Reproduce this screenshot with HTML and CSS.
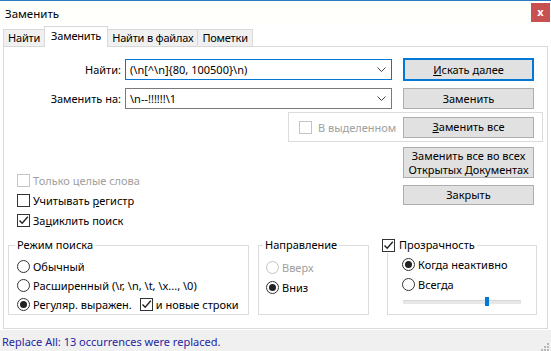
FILE: index.html
```html
<!DOCTYPE html>
<html lang="ru">
<head>
    <meta charset="UTF-8">
    <title>Заменить</title>
    <link rel="stylesheet" href="styles.css">
</head>
<body>
    <div class="titlebar">
        <span class="title">Заменить</span>
        <span class="close">x</span>
    </div>

    <div class="tabs">
        <div class="tab">Найти</div>
        <div class="tab active">Заменить</div>
        <div class="tab">Найти в файлах</div>
        <div class="tab">Пометки</div>
    </div>

    <div class="panel">
        <div class="row row-find">
            <span class="field-label">Найти:</span>
            <div class="combo focus">
                <span class="combo-text">(\n[^\n]{80, 100500}\n)</span>
                <svg class="chevron" width="9" height="6" viewBox="0 0 9 6"><polyline points="0.5,0.5 4.5,4.5 8.5,0.5" fill="none" stroke="#444" stroke-width="1"/></svg>
            </div>
            <button class="btn default"><u>И</u>скать далее</button>
        </div>

        <div class="row row-replace">
            <span class="field-label">Заменить на:</span>
            <div class="combo">
                <span class="combo-text">\n--!!!!!!\1</span>
                <svg class="chevron" width="9" height="6" viewBox="0 0 9 6"><polyline points="0.5,0.5 4.5,4.5 8.5,0.5" fill="none" stroke="#444" stroke-width="1"/></svg>
            </div>
            <button class="btn">Заменить</button>
        </div>

        <div class="frame">
            <label class="check disabled"><span class="box"></span><span>В выделенном</span></label>
            <button class="btn"><u>З</u>аменить все</button>
        </div>

        <div class="middle">
            <div class="options">
                <label class="check disabled"><span class="box"></span><span>Только целые слова</span></label>
                <label class="check"><span class="box"></span><span>Учитывать <u>р</u>егистр</span></label>
                <label class="check"><span class="box checked"><svg width="11" height="11" viewBox="0 0 11 11"><polyline points="1.5,5.5 4.2,8.3 9.8,1.8" fill="none" stroke="#222" stroke-width="1.4"/></svg></span><span>За<u>ц</u>иклить поиск</span></label>
            </div>
            <div class="actions">
                <button class="btn tall">Заменить все во всех<br>Открытых <u>Д</u>окументах</button>
                <button class="btn close-btn">Закрыть</button>
            </div>
        </div>

        <div class="groups">
            <fieldset class="group mode">
                <legend>Режим поиска</legend>
                <label class="radio"><span class="dot"></span><span>Обычный</span></label>
                <label class="radio"><span class="dot"></span><span>Расширенный (\r, \n, \t, \x..., \0)</span></label>
                <div class="radio-line">
                    <label class="radio"><span class="dot on"></span><span>Регуляр. выражен.</span></label>
                    <label class="check newlines"><span class="box checked"><svg width="11" height="11" viewBox="0 0 11 11"><polyline points="1.5,5.5 4.2,8.3 9.8,1.8" fill="none" stroke="#222" stroke-width="1.4"/></svg></span><span>и новые строки</span></label>
                </div>
            </fieldset>

            <fieldset class="group direction">
                <legend>Направление</legend>
                <label class="radio disabled"><span class="dot"></span><span>Вверх</span></label>
                <label class="radio"><span class="dot on"></span><span>Вниз</span></label>
            </fieldset>

            <fieldset class="group transparency">
                <legend><label class="check"><span class="box checked"><svg width="11" height="11" viewBox="0 0 11 11"><polyline points="1.5,5.5 4.2,8.3 9.8,1.8" fill="none" stroke="#222" stroke-width="1.4"/></svg></span><span>Прозрачность</span></label></legend>
                <label class="radio"><span class="dot on"></span><span>Когда неактивно</span></label>
                <label class="radio"><span class="dot"></span><span>Всегда</span></label>
                <div class="slider">
                    <div class="track"></div>
                    <div class="thumb"></div>
                </div>
            </fieldset>
        </div>
    </div>

    <div class="status">
        <span class="status-text">Replace All: 13 occurrences were replaced.</span>
        <svg class="grip" width="10" height="10" viewBox="0 0 10 10">
            <rect x="8" y="2" width="2" height="2" fill="#b8b8b8"/>
            <rect x="5" y="5" width="2" height="2" fill="#b8b8b8"/>
            <rect x="8" y="5" width="2" height="2" fill="#b8b8b8"/>
            <rect x="2" y="8" width="2" height="2" fill="#b8b8b8"/>
            <rect x="5" y="8" width="2" height="2" fill="#b8b8b8"/>
            <rect x="8" y="8" width="2" height="2" fill="#b8b8b8"/>
        </svg>
    </div>
</body>
</html>
```

FILE: styles.css
```css
body {
    margin: 0;
    width: 551px;
    height: 351px;
    overflow: hidden;
    background-color: #ffffff;
    font-family: "Noto Sans", "Open Sans", sans-serif;
    font-size: 11px;
    color: #000;
}
.titlebar {
    height: 25px;
    border-top: 1px solid #2b7bbf;
    box-sizing: border-box;
    display: flex;
    justify-content: space-between;
    background-color: #fffffb;
}
.title {
    padding-left: 5px;
    font-size: 11.5px;
    line-height: 26px;
}
.close {
    width: 19px;
    height: 19px;
    margin-top: 2px;
    margin-right: 1px;
    background-color: #c75050;
    color: #fff;
    font-weight: bold;
    font-size: 11px;
    line-height: 17px;
    text-align: center;
}
.tabs {
    display: flex;
    align-items: flex-end;
    height: 21px;
    padding-left: 3px;
}
.tab {
    height: 16px;
    line-height: 16px;
    padding: 0 4px;
    letter-spacing: -0.2px;
    background-color: #f0f0f0;
    border: 1px solid #d9d9d9;
    border-bottom: none;
    margin-left: -1px;
}
.tab:first-child {
    margin-left: 0;
}
.tab.active {
    height: 20px;
    line-height: 18px;
    padding: 0 6px;
    background-color: #fff;
    margin-bottom: -1px;
    position: relative;
    z-index: 1;
}
.panel {
    margin: 0 3px;
    height: 283px;
    box-sizing: border-box;
    border: 1px solid #d9d9d9;
    background-color: #fff;
}
.row {
    display: flex;
    align-items: center;
    height: 21px;
}
.row-find {
    margin-top: 12px;
}
.row-replace {
    margin-top: 8px;
}
.field-label {
    width: 117px;
    text-align: right;
}
.combo {
    margin-left: 4px;
    width: 267px;
    height: 21px;
    box-sizing: border-box;
    border: 1px solid #7a7a7a;
    display: flex;
    align-items: center;
    justify-content: space-between;
    padding: 0 5px 0 4px;
}
.combo.focus {
    border-color: #0078d7;
}
.btn {
    font-family: inherit;
    font-size: 11px;
    color: #000;
    width: 131px;
    height: 21px;
    padding: 0;
    box-sizing: border-box;
    background-color: #e1e1e1;
    border: 1px solid #adadad;
    line-height: 14px;
}
.row .btn {
    margin-left: 11px;
}
.btn.default {
    height: 23px;
    border: 2px solid #0078d7;
}
.frame {
    margin: 3px 0 0 284px;
    width: 255px;
    height: 30px;
    box-sizing: border-box;
    border: 1px solid #dcdcdc;
    display: flex;
    align-items: center;
    padding-left: 10px;
}
.frame .btn {
    margin-left: auto;
    margin-right: 8px;
}
.check, .radio {
    display: flex;
    align-items: center;
    height: 20px;
}
.box {
    width: 13px;
    height: 13px;
    box-sizing: border-box;
    border: 1px solid #333;
    margin-right: 3px;
    display: flex;
    align-items: center;
    justify-content: center;
    background-color: #fff;
}
.disabled {
    color: #a0a0a0;
}
.disabled .box, .disabled .dot {
    border-color: #c4c4c4;
}
.frame .check .box {
    margin-right: 6px;
}
.middle {
    display: flex;
}
.options {
    margin-top: 28px;
    padding-left: 13px;
}
.actions {
    margin-left: auto;
    margin-right: 13px;
    display: flex;
    flex-direction: column;
}
.btn.tall {
    margin-top: 5px;
    height: 31px;
}
.btn.close-btn {
    margin-top: 7px;
    height: 20px;
}
.groups {
    display: flex;
    margin-top: 7px;
    padding-left: 4px;
}
.group {
    margin: 0;
    height: 78px;
    box-sizing: border-box;
    border: 1px solid #dcdcdc;
    min-width: 0;
}
.group legend {
    padding: 0 2px;
    line-height: 16px;
}
.mode {
    width: 241px;
    padding: 4px 8px 0;
}
.mode legend {
    margin-left: -2px;
}
.mode .radio {
    height: 19px;
}
.direction {
    width: 111px;
    margin-left: 9px;
    padding: 4px 7px 0;
}
.direction legend {
    margin-left: -3px;
}
.transparency {
    width: 150px;
    margin-left: 18px;
    padding: 1px 14px 0;
}
.transparency legend {
    margin-left: -22px;
}
.transparency legend .check {
    height: 16px;
}
.transparency legend .box {
    margin-right: 4px;
}
.dot {
    width: 13px;
    height: 13px;
    box-sizing: border-box;
    border: 1px solid #333;
    border-radius: 50%;
    margin-right: 3px;
    display: flex;
    align-items: center;
    justify-content: center;
}
.dot.on::after {
    content: "";
    width: 7px;
    height: 7px;
    border-radius: 50%;
    background-color: #222;
}
.radio-line {
    display: flex;
    align-items: center;
}
.newlines {
    margin-left: 8px;
    height: 19px;
}
.slider {
    position: relative;
    height: 14px;
    width: 118px;
    margin-left: 1px;
    padding-top: 6px;
    box-sizing: border-box;
}
.track {
    height: 3px;
    background-color: #e7e7e7;
    border-top: 1px solid #d6d6d6;
}
.thumb {
    position: absolute;
    left: 82px;
    top: 3px;
    width: 4px;
    height: 9px;
    background-color: #0078d7;
}
.status {
    height: 22px;
    margin-top: 1px;
    background-color: #f0f0f0;
    display: flex;
    align-items: center;
    justify-content: space-between;
}
.status-text {
    padding-left: 2px;
    color: #2424a0;
    font-size: 11px;
}
.grip {
    margin-top: 10px;
    margin-right: 2px;
}
```
